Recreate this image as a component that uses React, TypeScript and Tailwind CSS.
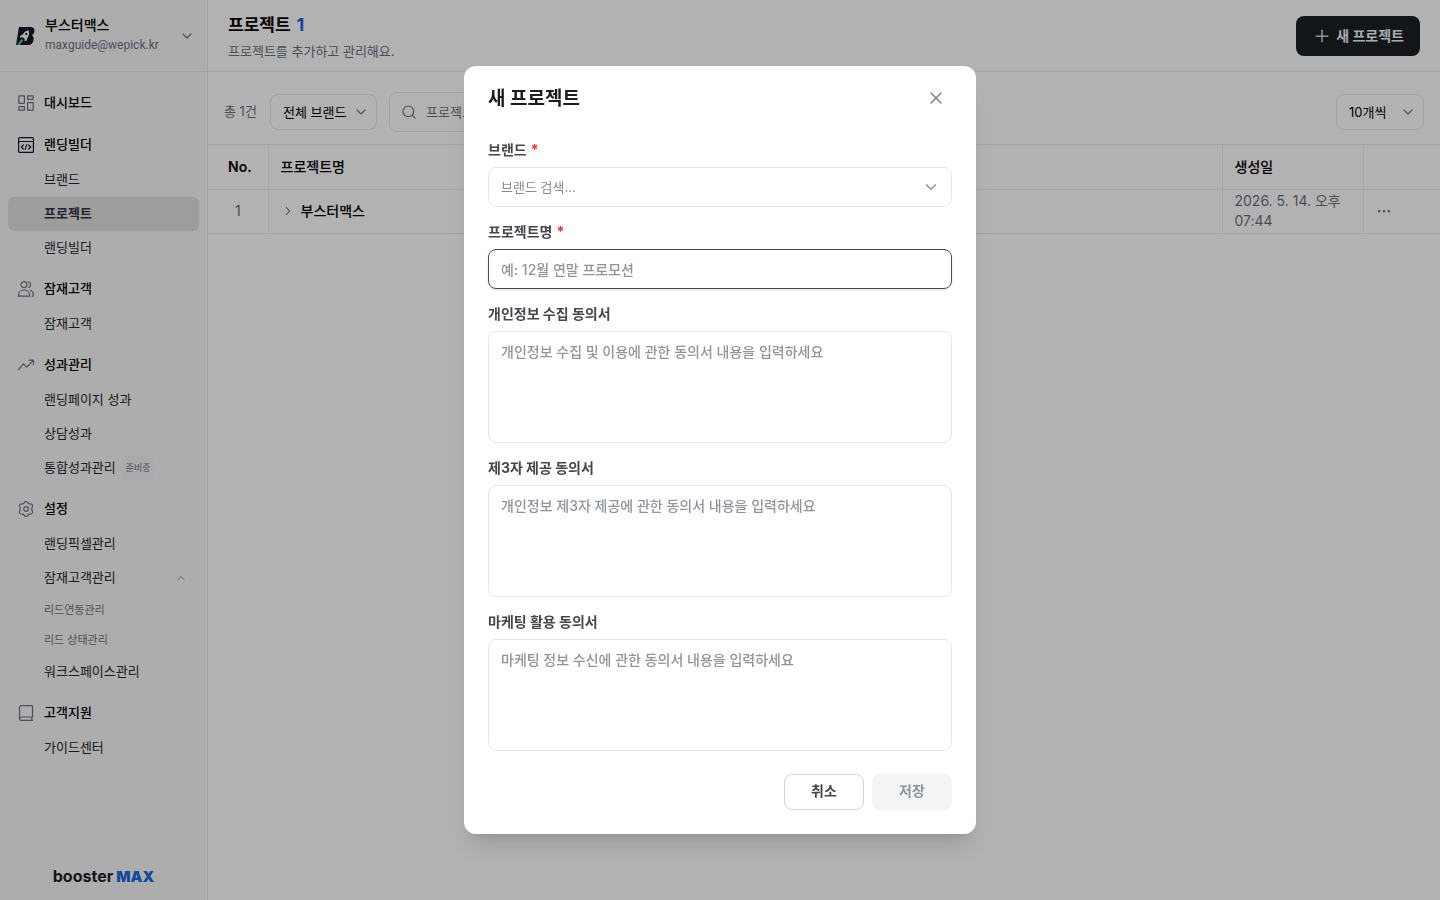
import type { ReactNode } from 'react';
import { ChevronDown, ChevronRight, ChevronUp, Plus, Search, X } from 'lucide-react';

type SubItem = { label: string; active?: boolean; badge?: string; children?: string[] };
type Section = { label: string; icon: ReactNode; items: SubItem[] };

function Glyph({ children, dark = false }: { children: ReactNode; dark?: boolean }) {
  return (
    <svg
      viewBox="0 0 16 16"
      className={dark ? 'size-4 shrink-0 text-gray-900' : 'size-4 shrink-0 text-gray-500'}
      fill="none"
      stroke="currentColor"
      strokeWidth="1.2"
      strokeLinecap="round"
      strokeLinejoin="round"
      aria-hidden="true"
    >
      {children}
    </svg>
  );
}

const dashboardIcon = (
  <Glyph>
    <rect x="0.8" y="0.8" width="5.6" height="7.6" rx="0.3" />
    <rect x="9.6" y="0.8" width="5.6" height="3.6" rx="0.3" />
    <rect x="0.8" y="11.6" width="5.6" height="3.6" rx="0.3" />
    <rect x="9.6" y="7.6" width="5.6" height="7.6" rx="0.3" />
  </Glyph>
);

const builderIcon = (
  <Glyph dark>
    <rect x="0.6" y="0.6" width="14.8" height="14.8" rx="1" />
    <path d="M0.5 4.5h15M5.3 8l-2 2 2 2M10.7 8l2 2-2 2M8.8 7.6l-1.6 4.8" />
  </Glyph>
);

const usersIcon = (
  <Glyph>
    <circle cx="6" cy="3.7" r="3" />
    <path d="M0.6 15.2v-1.4c0-2.8 2.3-4.8 5.4-4.8s5.5 2 5.5 4.8v1.4zM10.4 0.8a3 3 0 0 1 0.3 5.7M12.2 9.3c2 .7 3.2 2.3 3.2 4.5v1.4h-1.4" />
  </Glyph>
);

const trendIcon = (
  <Glyph>
    <path d="M0.6 12.6l4.8-5.8 3.4 3.4 6.4-6.6M11 3.2h4.4v4.4" />
  </Glyph>
);

const gearIcon = (
  <Glyph>
    <circle cx="8" cy="8" r="2.3" />
    <path d="M5.9 2.1Q8-1.1 10.1 2.1Q10.7 3 11.8 2.9Q15.6 2.9 14.1 6.4Q13.5 8 14.1 9.6Q15.6 13.1 11.8 13.1Q10.7 13 10.1 13.9Q8 17.1 5.9 13.9Q5.3 13 4.2 13.1Q.4 13.1 1.9 9.6Q2.5 8 1.9 6.4Q.4 2.9 4.2 2.9Q5.3 3 5.9 2.1Z" />
  </Glyph>
);

const bookIcon = (
  <Glyph>
    <path d="M14.5 12H3.3a1.7 1.7 0 0 0 0 3.4h11.2M13.8 12v3.4M1.5 13.5V2.6a2 2 0 0 1 2-2h10a1 1 0 0 1 1 1V12" />
  </Glyph>
);

const sections: Section[] = [
  { label: '대시보드', icon: dashboardIcon, items: [] },
  {
    label: '랜딩빌더',
    icon: builderIcon,
    items: [{ label: '브랜드' }, { label: '프로젝트', active: true }, { label: '랜딩빌더' }],
  },
  { label: '잠재고객', icon: usersIcon, items: [{ label: '잠재고객' }] },
  {
    label: '성과관리',
    icon: trendIcon,
    items: [{ label: '랜딩페이지 성과' }, { label: '상담성과' }, { label: '통합성과관리', badge: '준비중' }],
  },
  {
    label: '설정',
    icon: gearIcon,
    items: [
      { label: '랜딩픽셀관리' },
      { label: '잠재고객관리', children: ['리드연동관리', '리드 상태관리'] },
      { label: '워크스페이스관리' },
    ],
  },
  { label: '고객지원', icon: bookIcon, items: [{ label: '가이드센터' }] },
];

function BrandMark() {
  return (
    <svg viewBox="0 0 20 20" className="size-5 shrink-0" aria-hidden="true">
      <path d="M4 1h11.5c3 0 4.3 1.6 3.9 4.3-.3 2-1.2 3.4-2.5 4.2 1.4.7 2 2.1 1.7 4.3-.5 3.5-2.5 5.2-6 5.2H1z" fill="#131722" />
      <path d="M13.8 4.5c-2.6.2-4.7 1.5-5.8 3.7l-2.500 1.300-.4 2.200 2.500-.4 2.100 1.700-.1 2.600 2-1 .8-2.700c1.700-1.900 2.100-4.800 1.400-7.400z" fill="#f8f8f8" />
      <circle cx="11.3" cy="7.9" r="1.1" fill="#131722" />
      <path d="M6.3 13.1l2 1.5L4.8 19H2.2z" fill="#4cb89a" />
    </svg>
  );
}

function SidebarItem({ item }: { item: SubItem }) {
  return (
    <li>
      <a
        href="#"
        className={
          item.active
            ? 'flex h-[34px] items-center rounded-md bg-[#e1e1e3] pr-3 pl-9 text-[13px] font-bold text-[#33353d]'
            : 'flex h-[34px] items-center rounded-md pr-3 pl-9 text-[13px] text-[#26272d]'
        }
      >
        {item.label}
        {item.badge && (
          <span className="ml-1.5 flex h-6 items-center rounded-md bg-[#f3f4f6] px-1 text-[9px] text-gray-500">
            {item.badge}
          </span>
        )}
        {item.children && <ChevronUp className="ml-auto size-3 text-gray-500" strokeWidth={1.5} />}
      </a>
      {item.children && (
        <ul>
          {item.children.map((child) => (
            <li key={child}>
              <a href="#" className="flex h-[30px] items-center pl-9 text-[11px] text-gray-500">
                {child}
              </a>
            </li>
          ))}
        </ul>
      )}
    </li>
  );
}

function Sidebar() {
  return (
    <aside className="flex w-52 shrink-0 flex-col border-r border-gray-200 bg-[#f8f8f8]">
      <button type="button" className="flex h-[72px] items-center border-b border-gray-200 pr-3 pl-[15px] text-left">
        <BrandMark />
        <span className="ml-2.5 flex flex-col pb-0.5">
          <span className="text-sm leading-5 font-medium text-black">부스터맥스</span>
          <span className="font-['Roboto'] text-xs leading-5 text-gray-500">maxguide@wepick.kr</span>
        </span>
        <ChevronDown className="ml-auto size-4 text-gray-500" strokeWidth={1.75} />
      </button>
      <nav className="flex flex-col gap-1.5 px-2 pt-[13px]">
        {sections.map((section) => (
          <div key={section.label}>
            <a href="#" className="flex h-9 items-center gap-2.5 pl-2.5 text-[13px] font-medium text-black">
              {section.icon}
              {section.label}
            </a>
            {section.items.length > 0 && (
              <ul>
                {section.items.map((item) => (
                  <SidebarItem key={item.label} item={item} />
                ))}
              </ul>
            )}
          </div>
        ))}
      </nav>
      <div className="mt-auto flex items-baseline justify-center gap-[3px] pb-[11px] leading-6">
        <span className="text-base font-bold text-[#1a1f2b]">booster</span>
        <span className="text-[15px] font-black text-[#1a6be0]">MAX</span>
      </div>
    </aside>
  );
}

function SelectBox({ label, value, className }: { label: string; value: string; className: string }) {
  return (
    <div className="relative flex items-center">
      <select
        aria-label={label}
        className={`${className} h-9 appearance-none rounded-lg border border-gray-200 bg-white py-0 pl-3 text-[13px] leading-8 text-black outline-none`}
      >
        <option>{value}</option>
      </select>
      <ChevronDown className="pointer-events-none absolute right-2 size-4 text-gray-500" strokeWidth={1.75} />
    </div>
  );
}

function ProjectPage() {
  return (
    <main className="flex min-w-0 flex-1 flex-col bg-white">
      <header className="flex h-[72px] items-center justify-between border-b border-gray-200 px-5">
        <div className="pt-0.5">
          <h1 className="flex items-baseline gap-1.5 text-[17px] leading-7 font-bold text-black">
            프로젝트 <span className="text-lg leading-7 text-[#2463eb]">1</span>
          </h1>
          <p className="text-[13px] leading-6 text-gray-500">프로젝트를 추가하고 관리해요.</p>
        </div>
        <button type="button" className="flex h-10 items-center gap-1 rounded-lg bg-[#1b2024] px-4 text-sm font-bold text-gray-100">
          <Plus className="size-5" strokeWidth={1.5} />새 프로젝트
        </button>
      </header>
      <div className="flex h-[73px] items-center gap-3 border-b border-gray-200 px-4 pt-2">
        <span className="min-w-[34px] text-[13px] text-gray-500">총 1건</span>
        <SelectBox label="브랜드 필터" value="전체 브랜드" className="w-[107px]" />
        <div className="relative flex items-center">
          <Search className="absolute left-3 size-4 text-gray-500" strokeWidth={1.75} />
          <input
            aria-label="검색"
            type="search"
            placeholder="프로젝트명 검색"
            className="h-10 w-60 rounded-lg border border-gray-200 bg-white pr-3 pl-9 text-[13px] outline-none placeholder:text-gray-500"
          />
        </div>
        <div className="ml-auto">
          <SelectBox label="페이지 크기" value="10개씩" className="w-[88px]" />
        </div>
      </div>
      <table className="w-full table-fixed border-collapse text-left text-sm">
        <colgroup>
          <col className="w-[60px]" />
          <col />
          <col className="w-[141px]" />
          <col className="w-[77px]" />
        </colgroup>
        <thead>
          <tr className="h-11 border-b border-[#ececec] text-black">
            <th className="border-r border-[#ececec] p-0 pl-5 font-semibold">No.</th>
            <th className="border-r border-[#ececec] px-3 py-0 font-medium">프로젝트명</th>
            <th className="border-r border-[#ececec] px-3 py-0 font-medium">생성일</th>
            <th aria-label="작업" />
          </tr>
        </thead>
        <tbody>
          <tr className="h-11 border-b border-[#ececec] text-gray-500">
            <td className="border-r border-[#ececec] p-0 text-center">1</td>
            <td className="border-r border-[#ececec] px-3 py-0">
              <a href="#" className="flex items-center gap-1.5 font-medium text-black">
                <ChevronRight className="size-3.5 text-gray-600" strokeWidth={1.75} />
                부스터맥스
              </a>
            </td>
            <td className="border-r border-[#ececec] px-3 py-0 leading-5">2026. 5. 14. 오후 07:44</td>
            <td className="px-3 py-0">
              <button type="button" aria-label="더보기" className="flex size-4 items-center justify-center">
                <svg viewBox="0 0 16 16" className="size-4" fill="#7b808b" aria-hidden="true">
                  <rect x="2" y="7" width="2.4" height="2.4" rx="0.8" />
                  <rect x="6.8" y="7" width="2.4" height="2.4" rx="0.8" />
                  <rect x="11.6" y="7" width="2.4" height="2.4" rx="0.8" />
                </svg>
              </button>
            </td>
          </tr>
        </tbody>
      </table>
    </main>
  );
}

function FieldLabel({ id, text, required = false }: { id: string; text: string; required?: boolean }) {
  return (
    <label htmlFor={id} className="text-sm leading-[18px] font-bold text-[#44474f]">
      {text}
      {required && <span className="ml-1 text-red-500">*</span>}
    </label>
  );
}

const consents = [
  { id: 'privacy', label: '개인정보 수집 동의서', hint: '개인정보 수집 및 이용에 관한 동의서 내용을 입력하세요' },
  { id: 'third-party', label: '제3자 제공 동의서', hint: '개인정보 제3자 제공에 관한 동의서 내용을 입력하세요' },
  { id: 'marketing', label: '마케팅 활용 동의서', hint: '마케팅 정보 수신에 관한 동의서 내용을 입력하세요' },
];

function ProjectDialog() {
  return (
    <div className="fixed inset-0 flex items-center justify-center bg-black/30">
      <form
        role="dialog"
        aria-modal="true"
        aria-labelledby="dialog-title"
        className="w-full max-w-lg rounded-xl bg-white px-6 pb-6 shadow-xl"
      >
        <div className="flex h-16 items-center justify-between">
          <h2 id="dialog-title" className="pt-0.5 text-[19px] leading-7 font-bold text-[#1c1d22]">
            새 프로젝트
          </h2>
          <button type="button" aria-label="닫기" className="flex size-8 items-center justify-center">
            <X className="size-5 text-[#7d828d]" strokeWidth={1.75} />
          </button>
        </div>
        <div className="flex flex-col gap-4 pt-[11px]">
          <div className="flex flex-col gap-2">
            <FieldLabel id="brand" text="브랜드" required />
            <div className="relative flex items-center">
              <input
                id="brand"
                role="combobox"
                aria-expanded="false"
                placeholder="브랜드 검색..."
                className="h-10 w-full rounded-lg border border-gray-200 px-3 text-[13px] outline-none placeholder:text-[#868b96]"
              />
              <ChevronDown className="pointer-events-none absolute right-3 size-[18px] text-[#868b96]" strokeWidth={1.75} />
            </div>
          </div>
          <div className="flex flex-col gap-2">
            <FieldLabel id="name" text="프로젝트명" required />
            <input
              id="name"
              type="text"
              placeholder="예: 12월 연말 프로모션"
              className="h-10 w-full rounded-lg border border-[#4b4b50] px-3 text-sm shadow-sm outline-none placeholder:font-medium placeholder:text-[#8f949e]"
            />
          </div>
          {consents.map((consent) => (
            <div key={consent.id} className="flex flex-col gap-2">
              <FieldLabel id={consent.id} text={consent.label} />
              <textarea
                id={consent.id}
                placeholder={consent.hint}
                className="h-28 w-full resize-none rounded-lg border border-gray-200 px-3 py-2 text-sm leading-6 outline-none placeholder:font-medium placeholder:text-[#8f949e]"
              />
            </div>
          ))}
        </div>
        <div className="mt-[23px] flex justify-end gap-2">
          <button type="button" className="h-9 w-20 rounded-lg border border-gray-300 bg-white pb-0.5 text-sm font-bold text-[#44474f]">
            취소
          </button>
          <button type="submit" disabled className="h-9 w-20 rounded-lg bg-gray-100 pb-0.5 text-sm font-bold text-[#8f949e]">
            저장
          </button>
        </div>
      </form>
    </div>
  );
}

export default function App() {
  return (
    <div className="flex min-h-screen font-['Inter','Noto_Sans_CJK_KR',sans-serif]">
      <Sidebar />
      <ProjectPage />
      <ProjectDialog />
    </div>
  );
}
